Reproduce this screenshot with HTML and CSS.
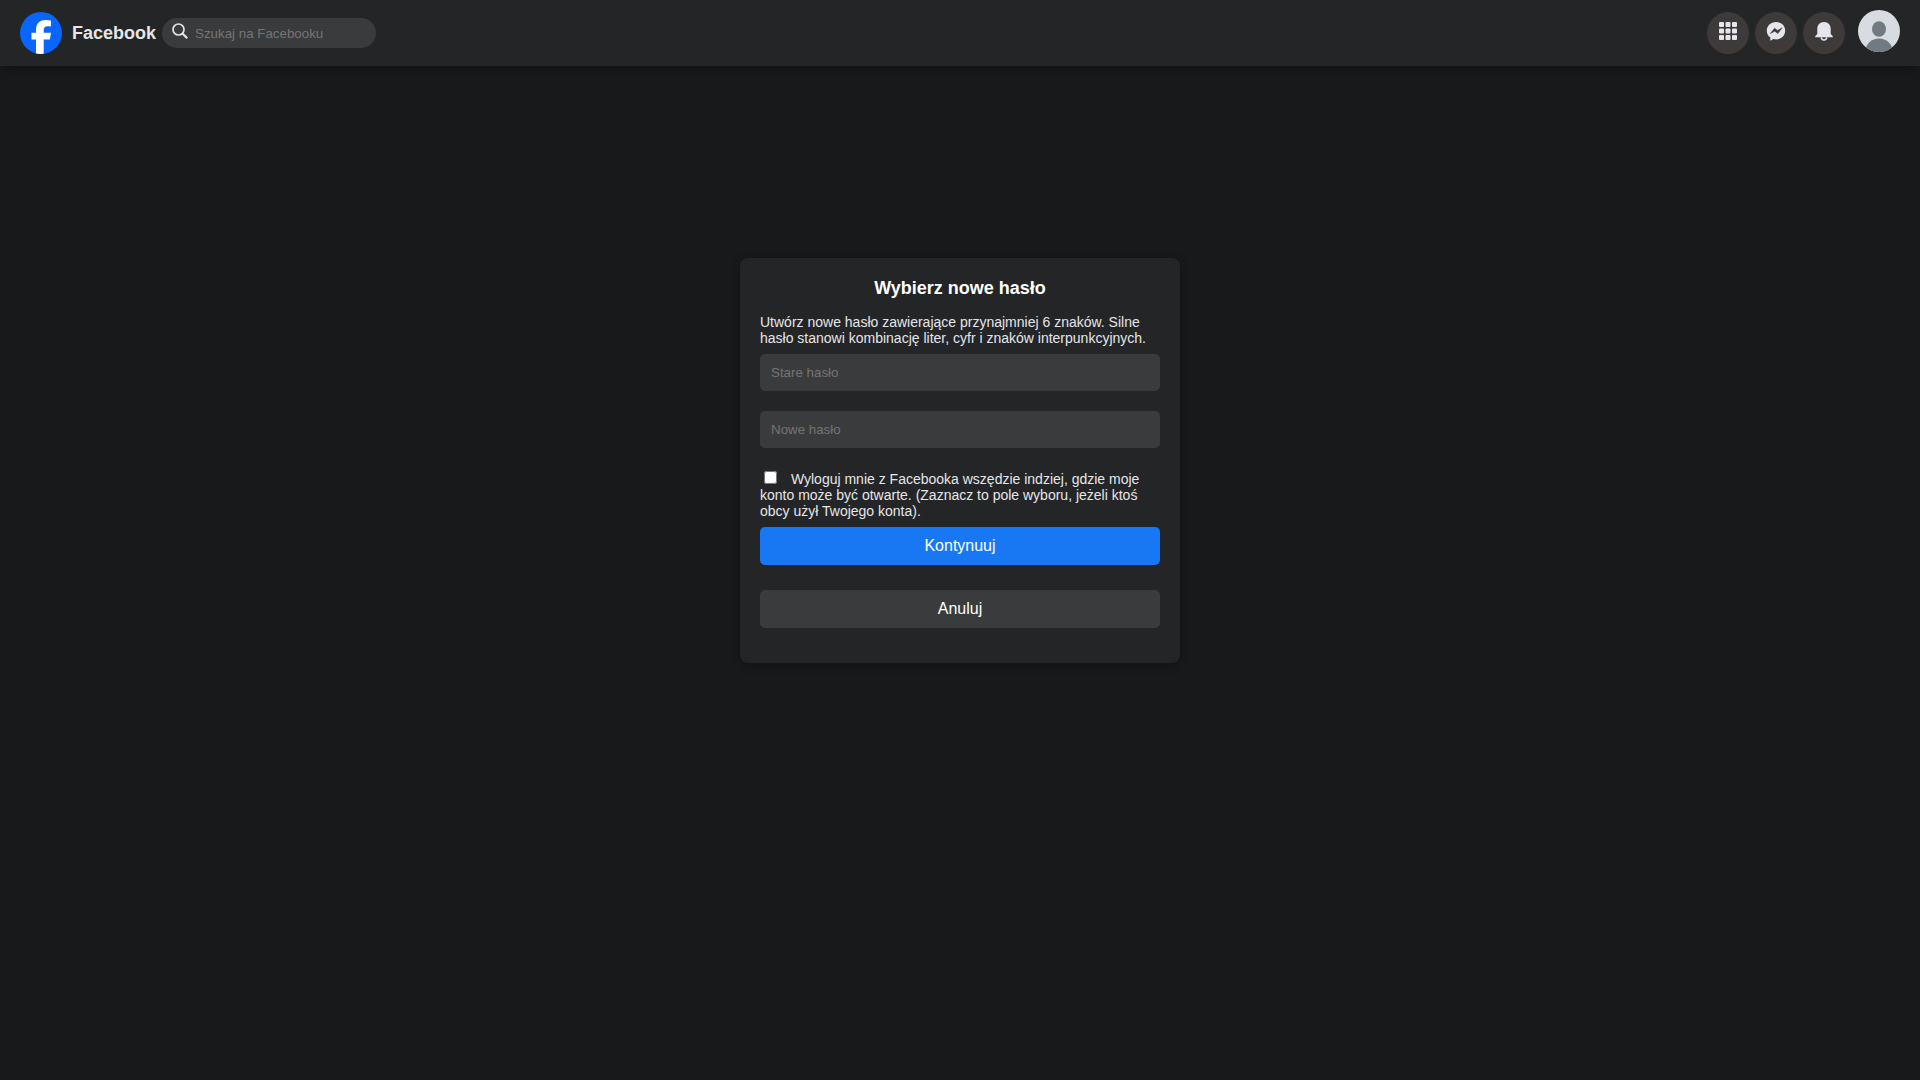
FILE: index.html
```html
<!DOCTYPE html>
<html lang="pl">
<head>
<meta charset="utf-8">
<meta name="viewport" content="width=device-width, initial-scale=1">
<title>Facebook</title>
<link rel="stylesheet" href="styles.css">
</head>
<body>
<header class="topbar">
  <a class="brand" href="#">
    <svg class="logo" viewBox="0 0 42 42" aria-hidden="true">
      <circle cx="21" cy="21" r="21" fill="#0866ff"/>
      <path fill="#fff" d="M16 41.600V27.500H11.500V20.800H16V18.200C16 11.200 19.500 8 26 8c1.800 0 3.600.2 5 .500V14.500c-.8-.2-1.800-.3-3-.3-3.200 0-4.300 1.300-4.300 4.200v2.400H31l-1.100 6.700H23.700V41.800Q19.500 42.200 16 41.600z"/>
    </svg>
    <span class="brand-name">Facebook</span>
  </a>
  <form class="search" role="search">
    <svg class="search-icon" viewBox="0 0 16 16" aria-hidden="true">
      <circle cx="6.500" cy="6.500" r="5.500" fill="none" stroke="#e4e6eb" stroke-width="1.700"/>
      <path d="M10.500 10.500L15.200 15.200" stroke="#e4e6eb" stroke-width="2.200"/>
    </svg>
    <input class="search-input" type="text" aria-label="Szukaj na Facebooku" placeholder="Szukaj na Facebooku">
  </form>
  <nav class="actions">
    <button class="round" type="button" aria-label="Menu">
      <svg class="icon" viewBox="0 0 20 20" fill="#e4e6eb" aria-hidden="true">
        <rect x="1" y="1" width="5" height="5" rx="1"/><rect x="7.500" y="1" width="5" height="5" rx="1"/><rect x="14" y="1" width="5" height="5" rx="1"/>
        <rect x="1" y="7.500" width="5" height="5" rx="1"/><rect x="7.500" y="7.500" width="5" height="5" rx="1"/><rect x="14" y="7.500" width="5" height="5" rx="1"/>
        <rect x="1" y="14" width="5" height="5" rx="1"/><rect x="7.500" y="14" width="5" height="5" rx="1"/><rect x="14" y="14" width="5" height="5" rx="1"/>
      </svg>
    </button>
    <button class="round" type="button" aria-label="Messenger">
      <svg class="icon" viewBox="0 0 20 20" aria-hidden="true">
        <path fill="#e4e6eb" d="M10 1C4.900 1 .8 4.700.8 9.500c0 3.200 1.200 5.300 3.500 7V19.700l3.200-1.600c.8.200 1.600.3 2.500.3 5.200 0 9.200-3.900 9.200-8.900S15.200 1 10 1z"/>
        <path fill="#3e3a39" d="M4.300 12.600L8.600 7.200l3 2.200 4.500-2.600-4.300 5.700-3-2.300z" stroke="#3e3a39" stroke-width=".5"/>
      </svg>
    </button>
    <button class="round" type="button" aria-label="Powiadomienia">
      <svg class="icon" viewBox="0 0 20 20" aria-hidden="true">
        <path fill="#e4e6eb" d="M10 1C5.700 1 3.300 3.900 3.300 8v5L1.200 15.300v1h17.600v-1L16.700 13V8C16.700 3.900 14.300 1 10 1z"/>
        <path d="M7.300 16.300a2.700 2.600 0 0 0 5.400 0" fill="none" stroke="#e4e6eb" stroke-width="1.500"/>
      </svg>
    </button>
    <button class="avatar" type="button" aria-label="Profil">
      <svg class="avatar-picture" viewBox="0 0 42 42" aria-hidden="true">
        <clipPath id="avatar-clip"><circle cx="21" cy="21" r="21"/></clipPath>
        <g clip-path="url(#avatar-clip)">
          <path fill="#d8dce1" d="M0 0h42v42H0z"/>
          <ellipse cx="21" cy="19" rx="7" ry="7.700" fill="#6f7a83"/>
          <ellipse cx="21" cy="41" rx="13.500" ry="12.500" fill="#6f7a83"/>
        </g>
      </svg>
    </button>
  </nav>
</header>
<main class="page">
  <form class="card">
    <h1 class="title">Wybierz nowe hasło</h1>
    <p class="text">Utwórz nowe hasło zawierające przynajmniej 6 znaków. Silne hasło stanowi kombinację liter, cyfr i znaków interpunkcyjnych.</p>
    <input class="field" type="password" aria-label="Stare hasło" placeholder="Stare hasło">
    <input class="field" type="password" aria-label="Nowe hasło" placeholder="Nowe hasło">
    <label class="text"><input class="tick" type="checkbox"> Wyloguj mnie z Facebooka wszędzie indziej, gdzie moje konto może być otwarte. (Zaznacz to pole wyboru, jeżeli ktoś obcy użył Twojego konta).</label>
    <button class="button primary" type="submit">Kontynuuj</button>
    <button class="button" type="button">Anuluj</button>
  </form>
</main>
</body>
</html>
```
FILE: styles.css
```css
* {
  box-sizing: border-box;
}

body {
  margin: 0;
  background: #18191a;
  color: #e4e6eb;
  font-family: "Liberation Sans", Arial, sans-serif;
}

button,
input {
  border: 0;
  font-family: inherit;
}

.topbar {
  display: flex;
  align-items: center;
  padding: 12px 20px;
  background: #242526;
  box-shadow: 0 2px 10px rgba(0, 0, 0, 0.3);
}

.brand {
  display: flex;
  align-items: center;
  gap: 10px;
  color: inherit;
  text-decoration: none;
}

.logo {
  width: 42px;
  height: 42px;
}

.brand-name {
  font-size: 18px;
  font-weight: bold;
}

.search {
  display: flex;
  gap: 7px;
  width: 214px;
  height: 30px;
  margin-left: 6px;
  padding: 0 10px;
  border-radius: 15px;
  background: #3a3b3c;
}

.search-icon {
  flex: none;
  width: 16px;
  height: 16px;
  margin-top: 5px;
}

.search-input {
  flex: 1;
  min-width: 0;
  padding: 0;
  background: none;
  color: #e4e6eb;
  outline: none;
}

.actions {
  display: flex;
  align-items: center;
  gap: 6px;
  margin-left: auto;
}

.round {
  display: flex;
  justify-content: center;
  width: 42px;
  height: 42px;
  padding: 9px 0;
  border-radius: 50%;
  background: #3e3a39;
}

.icon {
  width: 20px;
  height: 20px;
}

.avatar {
  height: 42px;
  margin: -4px 0 0 7px;
  padding: 0;
  border-radius: 50%;
  background: none;
}

.avatar-picture {
  display: block;
  width: 42px;
  height: 42px;
}

.page {
  padding: 192px 20px 40px;
}

.card {
  display: flex;
  flex-direction: column;
  max-width: 440px;
  margin: 0 auto;
  padding: 20px 20px 35px;
  border-radius: 8px;
  background: #242526;
  box-shadow: 0 2px 10px rgba(0, 0, 0, 0.3);
}

.title {
  margin: 0 0 16px;
  color: #fff;
  font-size: 18px;
  line-height: 20px;
  text-align: center;
}

.text {
  margin: 0 0 8px;
  font-size: 14px;
  line-height: 16px;
}

.field {
  height: 37px;
  margin-bottom: 20px;
  padding: 0 11px;
  border-radius: 5px;
  background: #3a3b3c;
  color: #e4e6eb;
}

.tick {
  margin: 3px 10px 3px 4px;
}

.button {
  height: 38px;
  border-radius: 5px;
  background: #3a3b3c;
  color: #fff;
  font-size: 16px;
}

.primary {
  margin-bottom: 25px;
  background: #1877f2;
}
```
